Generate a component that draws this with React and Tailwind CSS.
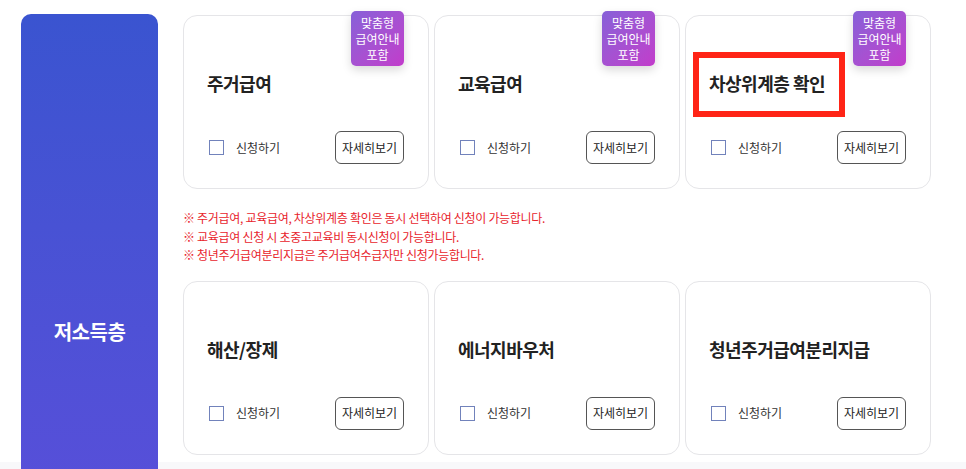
import React from 'react';

const rowOne = [
  { title: '주거급여', badge: true },
  { title: '교육급여', badge: true },
  { title: '차상위계층 확인', badge: true, marked: true },
];

const rowTwo = [
  { title: '해산/장제' },
  { title: '에너지바우처' },
  { title: '청년주거급여분리지급' },
];

const notes = [
  '※ 주거급여, 교육급여, 차상위계층 확인은 동시 선택하여 신청이 가능합니다.',
  '※ 교육급여 신청 시 초중고교육비 동시신청이 가능합니다.',
  '※ 청년주거급여분리지급은 주거급여수급자만 신청가능합니다.',
];

function BenefitCard({ title, badge, marked }) {
  return (
    <div className="relative h-[174px] rounded-[14px] border border-[#e5e5e8] bg-white">
      {badge && (
        <div className="absolute right-[24px] top-[-5px] flex h-[55px] w-[53px] flex-col items-center justify-center rounded-[5px] bg-gradient-to-br from-[#8660d8] to-[#c23bcb] text-[12px] leading-[16px] text-white shadow-[0_4px_10px_rgba(0,0,0,0.15)]">
          <span>맞춤형</span>
          <span>급여안내</span>
          <span>포함</span>
        </div>
      )}
      {marked && (
        <div className="absolute left-[7px] top-[36px] h-[65px] w-[152px] border-[6px] border-[#ff2416]"></div>
      )}
      <div className="relative pl-[23px] pt-[54px] text-[18px] font-bold leading-[26px] tracking-[-0.5px] text-[#222]">
        {title}
      </div>
      <div className="flex items-center justify-between pl-[25px] pr-[24px] pt-[35px]">
        <label className="flex items-center gap-[12px] text-[12px] text-[#333]">
          <span className="block h-[15px] w-[15px] border border-[#7182bb] bg-white"></span>
          신청하기
        </label>
        <button className="h-[33px] w-[69px] rounded-[6px] border border-[#555] bg-white text-[12px] text-[#222]">
          자세히보기
        </button>
      </div>
    </div>
  );
}

export default function App() {
  return (
    <div
      className="h-[469px] w-[966px] overflow-hidden bg-[linear-gradient(to_bottom,#ffffff_462px,#f8f8fa_462px)]"
      style={{ fontFamily: '"Noto Sans CJK KR", "Noto Sans", sans-serif' }}
    >
      <div className="flex items-start gap-[25px] pl-[21px] pt-[14px]">
        <div className="flex h-[636px] w-[137px] shrink-0 items-center justify-center rounded-t-[10px] bg-gradient-to-b from-[#3a54d0] to-[#5f4ddc] text-[20px] font-bold tracking-[-0.5px] text-white">
          저소득층
        </div>
        <div className="w-[748px] pt-[1px]">
          <div className="grid grid-cols-3 gap-[5px]">
            {rowOne.map((c) => (
              <BenefitCard key={c.title} {...c} />
            ))}
          </div>
          <div className="pb-[16px] pt-[20px] text-[12px] leading-[18.5px] tracking-[-0.3px] text-[#e8242c]">
            {notes.map((n) => (
              <p key={n}>{n}</p>
            ))}
          </div>
          <div className="grid grid-cols-3 gap-[5px]">
            {rowTwo.map((c) => (
              <BenefitCard key={c.title} {...c} />
            ))}
          </div>
        </div>
      </div>
    </div>
  );
}
